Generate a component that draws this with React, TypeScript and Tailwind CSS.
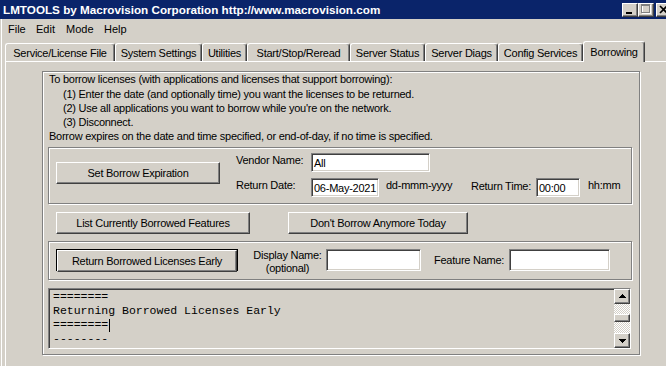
import React from 'react';

const bevel =
  'border border-t-white border-l-white border-b-[#404040] border-r-[#404040] shadow-[inset_-1px_-1px_0_#808080]';
const sunken =
  'border border-t-[#808080] border-l-[#808080] border-b-white border-r-white shadow-[inset_1px_1px_0_#404040,inset_-1px_-1px_0_#d4d0c8]';
const etched = 'border border-[#808080] shadow-[inset_1px_1px_0_#ffffff,1px_1px_0_#ffffff]';

const tabs = [
  { label: 'Service/License File', w: 'w-[110px]' },
  { label: 'System Settings', w: 'w-[87px]' },
  { label: 'Utilities', w: 'w-[45px]' },
  { label: 'Start/Stop/Reread', w: 'w-[103px]' },
  { label: 'Server Status', w: 'w-[75px]' },
  { label: 'Server Diags', w: 'w-[73px]' },
  { label: 'Config Services', w: 'w-[85px]' },
];

const menus = [
  { label: 'File', w: 'w-[28px]' },
  { label: 'Edit', w: 'w-[30px]' },
  { label: 'Mode', w: 'w-[38px]' },
  { label: 'Help', w: 'w-[30px]' },
];

const logLines = ['========', 'Returning Borrowed Licenses Early', '========', '--------'];

const CaptionButton: React.FC<{ children: React.ReactNode }> = ({ children }) => (
  <div className={`w-[16px] h-[14px] bg-[#d4d0c8] ${bevel} flex items-center justify-center`}>
    {children}
  </div>
);

const Button: React.FC<{ label: string; className?: string }> = ({ label, className = '' }) => (
  <div className={`h-[22px] bg-[#d4d0c8] ${bevel} flex items-center justify-center whitespace-nowrap ${className}`}>
    {label}
  </div>
);

const Input: React.FC<{ value?: string; className?: string }> = ({ value = '', className = '' }) => (
  <div className={`bg-white ${sunken} pl-[2px] flex items-center ${className}`}>{value}</div>
);

export default function App() {
  return (
    <div className="w-[666px] h-[366px] overflow-hidden bg-[#d4d0c8] text-black text-[11px] leading-[14px] tracking-[-0.25px] font-['Liberation_Sans',Arial,sans-serif]">
      {/* title bar */}
      <div className="h-[19px] bg-[#0a246a] flex items-center pl-[3px]">
        <span className="text-white font-bold text-[11.7px] tracking-normal">
          LMTOOLS by Macrovision Corporation http://www.macrovision.com
        </span>
        <div className="ml-auto mr-[-6px] flex items-center">
          <CaptionButton>
            <svg width="14" height="12" viewBox="0 0 14 12" shapeRendering="crispEdges">
              <rect x="3" y="8" width="6" height="2" fill="#000" />
            </svg>
          </CaptionButton>
          <CaptionButton>
            <svg width="14" height="12" viewBox="0 0 14 12" shapeRendering="crispEdges">
              <rect x="3.5" y="1.5" width="8" height="8" fill="none" stroke="#ffffff" />
              <rect x="2.5" y="0.5" width="8" height="8" fill="none" stroke="#808080" />
              <rect x="2" y="1" width="9" height="1" fill="#808080" />
            </svg>
          </CaptionButton>
          <div className="w-[2px]" />
          <CaptionButton>
            <svg width="14" height="12" viewBox="0 0 14 12">
              <path d="M3 2 L10 9 M10 2 L3 9" stroke="#000" strokeWidth="1.6" />
            </svg>
          </CaptionButton>
        </div>
      </div>

      <div className="pl-px">
        <div className="border-l border-white h-[347px]">
          {/* menu bar */}
          <div className="h-[19px] flex items-center pl-[6px] tracking-normal">
            {menus.map((m) => (
              <div key={m.label} className={m.w}>
                {m.label}
              </div>
            ))}
          </div>

          {/* tabs */}
          <div className="mt-[3px] ml-[3px] h-[20px] flex items-end">
            {tabs.map((t) => (
              <div
                key={t.label}
                className={`${t.w} h-[18px] border-t border-l border-white border-r border-r-[#404040] shadow-[inset_-1px_0_0_#808080] rounded-t-[3px] flex items-center justify-center whitespace-nowrap`}
              >
                {t.label}
              </div>
            ))}
            <div className="relative z-10 w-[62px] h-[21px] -mb-px bg-[#d4d0c8] border-t border-l border-white border-r border-r-[#404040] shadow-[inset_-1px_0_0_#808080] rounded-t-[3px] flex items-center justify-center pb-[1px]">
              Borrowing
            </div>
          </div>

          {/* tab panel */}
          <div className="ml-[3px] border-t border-l border-white pl-[36px] pt-[9px] h-[305px]">
            <div className={`w-[598px] h-[284px] ${etched} flex flex-col`}>
              <div className="pl-[6px]">
                <p>To borrow licenses (with applications and licenses that support borrowing):</p>
                <p className="pl-[14px] mt-[1px]">
                  (1) Enter the date (and optionally time) you want the licenses to be returned.
                </p>
                <p className="pl-[14px]">(2) Use all applications you want to borrow while you're on the network.</p>
                <p className="pl-[14px]">(3) Disconnect.</p>
                <p>Borrow expires on the date and time specified, or end-of-day, if no time is specified.</p>
              </div>

              {/* expiration group */}
              <div className={`ml-[5px] mt-[4px] w-[584px] h-[57px] ${etched} flex`}>
                <Button label="Set Borrow Expiration" className="ml-[7px] mt-[14px] w-[164px]" />
                <div className="ml-[16px] mt-[5px] flex flex-col gap-[6px]">
                  <div className="flex h-[19px]">
                    <span className="w-[75px]">Vendor Name:</span>
                    <Input value="All" className="w-[119px] h-[19px]" />
                  </div>
                  <div className="flex h-[19px]">
                    <span className="w-[75px]">Return Date:</span>
                    <Input value="06-May-2021" className="w-[68px] h-[19px]" />
                    <span className="ml-[7px] w-[85px]">dd-mmm-yyyy</span>
                    <span className="w-[65px] pt-[1px]">Return Time:</span>
                    <Input value="00:00" className="w-[44px] h-[19px]" />
                    <span className="ml-[8px]">hh:mm</span>
                  </div>
                </div>
              </div>

              {/* action buttons */}
              <div className="ml-[13px] mt-[8px] flex">
                <Button label="List Currently Borrowed Features" className="w-[194px]" />
                <Button label="Don't Borrow Anymore Today" className="ml-[38px] w-[180px]" />
              </div>

              {/* return group */}
              <div className={`ml-[5px] mt-[7px] w-[584px] h-[39px] ${etched} flex items-start`}>
                <div className="ml-[7px] mt-[7px] w-[182px] h-[22px] border border-black">
                  <Button label="Return Borrowed Licenses Early" className="h-[20px]" />
                </div>
                <div className="ml-[14px] mt-[7px] w-[71px] text-center leading-[13px] whitespace-nowrap">
                  <div>Display Name:</div>
                  <div>(optional)</div>
                </div>
                <Input className="ml-[3px] mt-[7px] w-[95px] h-[22px]" />
                <span className="ml-[13px] mt-[11px] w-[75px] whitespace-nowrap">Feature Name:</span>
                <Input className="mt-[7px] w-[101px] h-[22px]" />
              </div>

              {/* log */}
              <div className="ml-[5px] mt-[8px] w-[583px] h-[61px] border border-t-[#808080] border-l-[#808080] border-b-white border-r-white shadow-[inset_1px_1px_0_#404040] flex">
                <div className="flex-1 pl-[4px] pt-[1px] font-['Liberation_Mono','Courier_New',monospace] text-[11.5px] leading-[14px] tracking-normal whitespace-pre">
                  {logLines.map((l, i) => (
                    <div key={i} className="flex items-center">
                      {l}
                      {i === 2 && <span className="ml-[1px] w-px h-[13px] bg-black" />}
                    </div>
                  ))}
                </div>
                <div className="w-[16px] flex flex-col">
                  <div className={`h-[15px] bg-[#d4d0c8] ${bevel} flex items-center justify-center`}>
                    <svg width="8" height="5" viewBox="0 0 8 5" shapeRendering="crispEdges">
                      <polygon points="0,4 4,0 8,4" fill="#000" />
                    </svg>
                  </div>
                  <div className="flex-1 bg-[image:repeating-conic-gradient(#ffffff_0%_25%,#d4d0c8_0%_50%)] bg-[length:2px_2px] pt-[10px]">
                    <div className={`h-[8px] bg-[#d4d0c8] ${bevel}`} />
                  </div>
                  <div className={`h-[15px] bg-[#d4d0c8] ${bevel} flex items-center justify-center`}>
                    <svg width="8" height="5" viewBox="0 0 8 5" shapeRendering="crispEdges">
                      <polygon points="0,1 8,1 4,5" fill="#000" />
                    </svg>
                  </div>
                </div>
              </div>
            </div>
          </div>
        </div>
      </div>
    </div>
  );
}
